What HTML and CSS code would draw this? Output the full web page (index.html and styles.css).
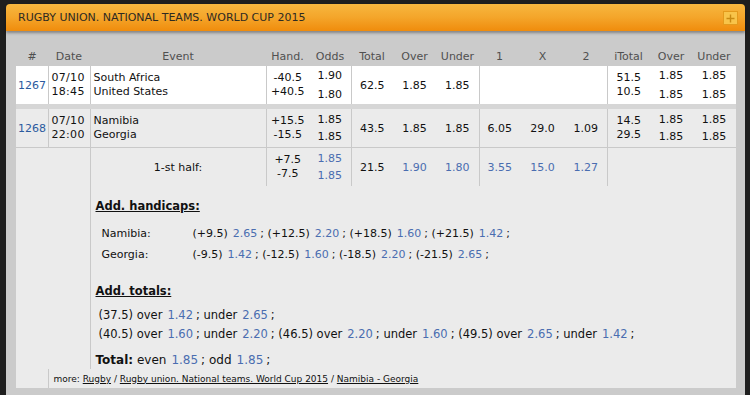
FILE: index.html
```html
<!DOCTYPE html>
<html>
<head>
<meta charset="utf-8">
<link rel="stylesheet" href="styles.css">
</head>
<body>
<div class="wrap">
  <div class="head">
    <span class="title">RUGBY UNION. NATIONAL TEAMS. WORLD CUP 2015</span>
    <span class="plus"><svg width="9" height="9" viewBox="0 0 9 9"><path d="M4.5 0.5v8M0.5 4.5h8" stroke="#c98a12" stroke-width="1.4"/></svg></span>
  </div>
  <div class="panel">
    <table class="grid">
      <colgroup>
        <col style="width:32px"><col style="width:42px"><col style="width:176px"><col style="width:43px"><col style="width:42px">
        <col style="width:42px"><col style="width:43px"><col style="width:43px">
        <col style="width:41px"><col style="width:45px"><col style="width:42px">
        <col style="width:43px"><col style="width:42px"><col style="width:44px">
      </colgroup>
      <thead>
        <tr class="hdr">
          <th>#</th><th>Date</th><th>Event</th><th>Hand.</th><th>Odds</th><th>Total</th><th>Over</th><th>Under</th><th>1</th><th>X</th><th>2</th><th>iTotal</th><th>Over</th><th>Under</th>
        </tr>
      </thead>
      <tbody>
        <tr class="ev white r1">
          <td class="num br"><a class="lnk">1267</a></td>
          <td class="date br">07/10<br>18:45</td>
          <td class="name br">South Africa<br>United States</td>
          <td class="c two">-40.5<br>+40.5</td>
          <td class="c br"><div class="od">1.90</div><div class="od">1.80</div></td>
          <td class="c">62.5</td>
          <td class="c">1.85</td>
          <td class="c br">1.85</td>
          <td></td><td></td><td class="br"></td>
          <td class="c two">51.5<br>10.5</td>
          <td class="c"><div class="od">1.85</div><div class="od">1.85</div></td>
          <td class="c"><div class="od">1.85</div><div class="od">1.85</div></td>
        </tr>
        <tr class="gap"><td colspan="14"></td></tr>
        <tr class="ev r2">
          <td class="num br bb"><a class="lnk">1268</a></td>
          <td class="date br bb">07/10<br>22:00</td>
          <td class="name br bb">Namibia<br>Georgia</td>
          <td class="c two bb">+15.5<br>-15.5</td>
          <td class="c br bb"><div class="od2">1.85</div><div class="od2">1.85</div></td>
          <td class="c bb">43.5</td>
          <td class="c bb">1.85</td>
          <td class="c br bb">1.85</td>
          <td class="c bb">6.05</td>
          <td class="c bb">29.0</td>
          <td class="c br bb">1.09</td>
          <td class="c two bb">14.5<br>29.5</td>
          <td class="c bb"><div class="od2">1.85</div><div class="od2">1.85</div></td>
          <td class="c bb"><div class="od2">1.85</div><div class="od2">1.85</div></td>
        </tr>
        <tr class="ev r3">
          <td colspan="2" rowspan="2" class="br"></td>
          <td class="half br">1-st half:</td>
          <td class="c two">+7.5<br>-7.5</td>
          <td class="c br blue"><div class="od2">1.85</div><div class="od2">1.85</div></td>
          <td class="c">21.5</td>
          <td class="c blue">1.90</td>
          <td class="c br blue">1.80</td>
          <td class="c blue">3.55</td>
          <td class="c blue">15.0</td>
          <td class="c br blue">1.27</td>
          <td colspan="3"></td>
        </tr>
        <tr class="ev">
          <td colspan="12" class="details">
            <div class="sub">Add. handicaps:</div>
            <div class="hrow first"><span class="team">Namibia:</span><span class="vals">(+9.5)<b class="o">2.65</b>; (+12.5)<b class="o">2.20</b>; (+18.5)<b class="o">1.60</b>; (+21.5)<b class="o">1.42</b>;</span></div>
            <div class="hrow"><span class="team">Georgia:</span><span class="vals">(-9.5)<b class="o">1.42</b>; (-12.5)<b class="o">1.60</b>; (-18.5)<b class="o">2.20</b>; (-21.5)<b class="o">2.65</b>;</span></div>
            <div class="sub sub2">Add. totals:</div>
            <div class="trow">(37.5) over<b class="o">1.42</b>; under<b class="o">2.65</b>;</div>
            <div class="trow">(40.5) over<b class="o">1.60</b>; under<b class="o">2.20</b>; (46.5) over<b class="o">2.20</b>; under<b class="o">1.60</b>; (49.5) over<b class="o">2.65</b>; under<b class="o">1.42</b>;</div>
            <div class="total"><strong>Total:</strong> even<b class="o">1.85</b>; odd<b class="o">1.85</b>;</div>
          </td>
        </tr>
        <tr class="ev more">
          <td></td>
          <td colspan="13" class="bl">more: <u>Rugby</u> / <u>Rugby union. National teams. World Cup 2015</u> / <u>Namibia - Georgia</u></td>
        </tr>
      </tbody>
    </table>
  </div>
</div>
</body>
</html>
```

FILE: styles.css
```css
html, body {
  margin: 0;
  padding: 0;
  background: #1e1e1e;
}
body {
  font-family: "DejaVu Sans", Verdana, sans-serif;
  font-size: 11px;
  color: #111;
}
.wrap {
  margin-left: 6px;
  width: 739px;
  padding-top: 4px;
}
.head {
  height: 27px;
  border-radius: 4px 4px 0 0;
  background: linear-gradient(to bottom, #f7b73f 0%, #f4a52a 50%, #f08c0c 100%);
  box-shadow: 0 2px 3px rgba(0,0,0,0.35);
  display: flex;
  align-items: center;
  justify-content: space-between;
  padding: 0 7px 0 12px;
  position: relative;
  z-index: 1;
}
.title {
  font-size: 11px;
  color: #2e2a22;
}
.plus {
  width: 13px;
  height: 12px;
  border: 1px solid #e49a1c;
  background: #f8c44a;
  display: flex;
  align-items: center;
  justify-content: center;
  margin-top: 1px;
}
.panel {
  background: #cbcbcb;
  padding: 12px 9px 9px 10px;
}
.grid {
  width: 720px;
  table-layout: fixed;
  border-collapse: collapse;
  border-spacing: 0;
}
.grid td, .grid th {
  padding: 0;
}
.hdr th {
  height: 19px;
  padding-top: 4px;
  font-weight: normal;
  color: #505050;
  text-align: center;
  vertical-align: middle;
}
.ev td {
  background: #ebebeb;
  vertical-align: middle;
}
.white td {
  background: #fff;
}
.r1 td { height: 36px; }
.r2 td { height: 38px; }
.r3 td { height: 38px; }
.br { border-right: 1px solid #c9c9c9; }
.bl { border-left: 1px solid #c9c9c9; }
.bb { border-bottom: 1px solid #c9c9c9; }
.gap td {
  height: 5px;
  background: #d6d6d6;
}
.num {
  padding-left: 2px !important;
}
.lnk {
  color: #2b5a9e;
}
.date {
  padding-left: 3px !important;
  line-height: 14px;
  letter-spacing: 0.3px;
}
.name {
  padding-left: 3px !important;
  line-height: 14px;
}
.c {
  text-align: center;
}
.two {
  line-height: 14px;
}
.od {
  line-height: 19px;
}
.od2 {
  line-height: 17px;
}
.blue {
  color: #4a6db0;
}
.half {
  text-align: center;
}
.details {
  border-left: 1px solid #c9c9c9;
  padding: 12px 0 0 5px !important;
  vertical-align: top !important;
}
.sub {
  font-weight: bold;
  text-decoration: underline;
  font-size: 11.5px;
  line-height: 16px;
}
.sub2 {
  margin-top: 18px;
}
.hrow {
  display: flex;
  line-height: 21px;
  padding-left: 6px;
}
.hrow.first {
  margin-top: 9px;
}
.team {
  width: 91px;
}
.o {
  font-weight: normal;
  color: #4a6db0;
  margin: 0 3px 0 5px;
}
.trow {
  line-height: 19px;
  padding-left: 3px;
  font-size: 11.5px;
}
.sub2 + .trow {
  margin-top: 7px;
}
.total {
  font-size: 12px;
  line-height: 18px;
  margin-top: 7px;
}
.more td {
  height: 19px;
  font-size: 9px;
  padding-left: 5px;
}
```
